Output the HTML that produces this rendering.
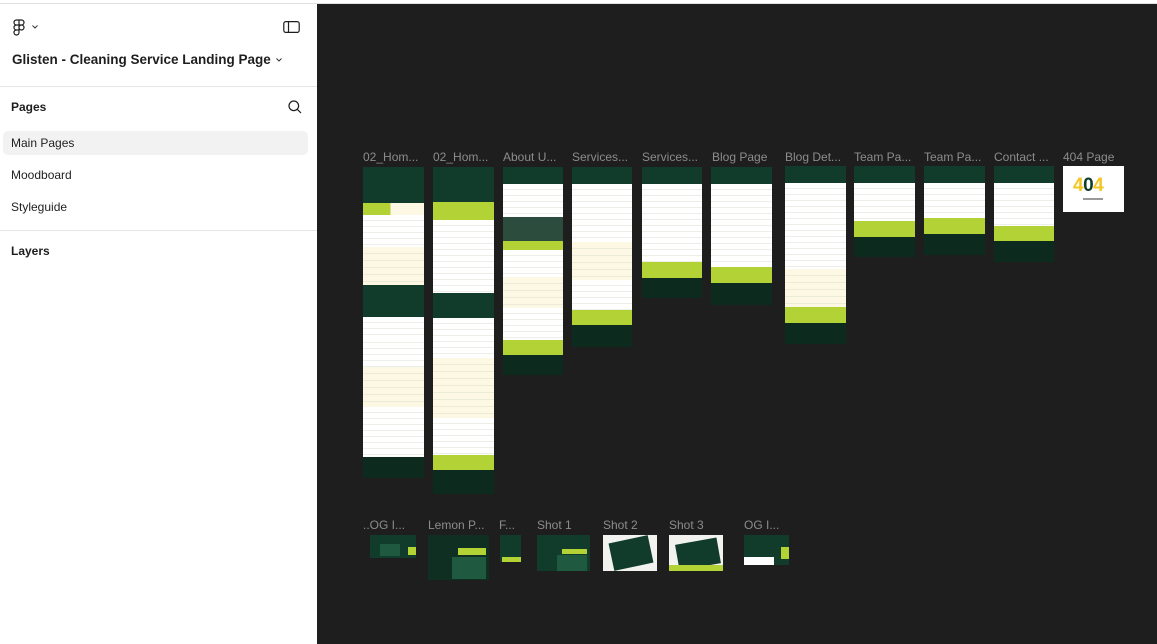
<!DOCTYPE html>
<html><head><meta charset="utf-8"><style>
*{margin:0;padding:0;box-sizing:border-box}
body{width:1157px;height:644px;overflow:hidden;background:#1e1e1e;font-family:"Liberation Sans",sans-serif;position:relative}
#top{position:absolute;left:0;top:0;width:1157px;height:4px;background:#fff;border-bottom:1px solid #e0e0e0}
#side{position:absolute;left:0;top:4px;width:317px;height:640px;background:#fff}
.t{position:absolute;font-size:12px;color:#1e1e1e}
.hr{position:absolute;left:0;width:317px;height:1px;background:#e6e6e6}
.lbl{position:absolute;font-size:12px;color:#8c8c8c;white-space:nowrap}
.f{position:absolute;display:flex;flex-direction:column;overflow:hidden}
.f div{flex:none}
.d{background:#113c2b}
.w{background:#fff repeating-linear-gradient(180deg,#fff 0 5px,#eceee8 5px 6px)}
.l{background:#b3d236}
.c{background:#fcf8e4 repeating-linear-gradient(180deg,#fcf8e4 0 6px,#ecebd8 6px 7px)}
.ft{background:#0d2a1f}.p{background:#2c4c3e}
.th{position:absolute;background:#113c2b;overflow:hidden}
</style></head><body>
<div id="top"></div>
<div id="side">
 <svg style="position:absolute;left:13px;top:15px" width="12" height="17" viewBox="0 0 12 17" fill="none" stroke="#1e1e1e" stroke-width="1.2"><path d="M6 1H3.5a2.5 2.5 0 0 0 0 5H6zM6 1h2.5a2.5 2.5 0 0 1 0 5H6zM6 6H3.5a2.5 2.5 0 0 0 0 5H6zM6 11H3.5A2.5 2.5 0 1 0 6 13.5zM6 8.5a2.5 2.5 0 1 0 5 0a2.5 2.5 0 1 0-5 0"/></svg>
 <svg style="position:absolute;left:32px;top:21px" width="6" height="4" viewBox="0 0 6 4"><path d="M.5.5L3 3 5.5.5" stroke="#333" fill="none"/></svg>
 <svg style="position:absolute;left:283px;top:16px" width="18" height="14" viewBox="0 0 18 14" fill="none" stroke="#1e1e1e" stroke-width="1.2"><rect x=".8" y="1.6" width="15.4" height="10.8" rx="2"/><path d="M5.5 1.6v10.8"/></svg>
 <div class="t" style="left:12px;top:48px;font-size:13.5px;font-weight:bold;color:#1e1e1e">Glisten - Cleaning Service Landing Page</div>
 <svg style="position:absolute;left:276px;top:54px" width="6" height="4" viewBox="0 0 6 4"><path d="M.5.5L3 3 5.5.5" stroke="#333" fill="none"/></svg>
 <div class="hr" style="top:82px"></div>
 <div class="t" style="left:11px;top:96px;font-weight:bold">Pages</div>
 <svg style="position:absolute;left:288px;top:96px" width="14" height="14" viewBox="0 0 14 14" fill="none" stroke="#1e1e1e" stroke-width="1.2"><circle cx="5.8" cy="5.8" r="4.8"/><path d="M9.3 9.3L13 13"/></svg>
 <div style="position:absolute;left:3px;top:127px;width:305px;height:24px;background:#f2f2f2;border-radius:5px"></div>
 <div class="t" style="left:11px;top:132px">Main Pages</div>
 <div class="t" style="left:11px;top:164px">Moodboard</div>
 <div class="t" style="left:11px;top:196px">Styleguide</div>
 <div class="hr" style="top:226px"></div>
 <div class="t" style="left:11px;top:240px;font-weight:bold">Layers</div>
</div>

<div class="lbl" style="left:363px;top:150px">02_Hom...</div>
<div class="lbl" style="left:433px;top:150px">02_Hom...</div>
<div class="lbl" style="left:503px;top:150px">About U...</div>
<div class="lbl" style="left:572px;top:150px">Services...</div>
<div class="lbl" style="left:642px;top:150px">Services...</div>
<div class="lbl" style="left:712px;top:150px">Blog Page</div>
<div class="lbl" style="left:785px;top:150px">Blog Det...</div>
<div class="lbl" style="left:854px;top:150px">Team Pa...</div>
<div class="lbl" style="left:924px;top:150px">Team Pa...</div>
<div class="lbl" style="left:994px;top:150px">Contact ...</div>
<div class="lbl" style="left:1063px;top:150px">404 Page</div>

<div class="f" style="left:363px;top:167px;width:61px;height:311px"><div class="d" style="height:36px"></div><div class="l" style="height:12px;background:linear-gradient(90deg,#b3d236 45%,#fcf8e4 45%)"></div><div class="w" style="height:32px"></div><div class="c" style="height:38px"></div><div class="d" style="height:32px"></div><div class="w" style="height:20px"></div><div class="w" style="height:30px"></div><div class="c" style="height:40px"></div><div class="w" style="height:50px"></div><div class="ft" style="height:21px"></div></div>
<div class="f" style="left:433px;top:167px;width:61px;height:327px"><div class="d" style="height:35px"></div><div class="l" style="height:18px"></div><div class="w" style="height:73px"></div><div class="d" style="height:25px"></div><div class="w" style="height:40px"></div><div class="c" style="height:60px"></div><div class="w" style="height:37px"></div><div class="l" style="height:15px"></div><div class="ft" style="height:24px"></div></div>
<div class="f" style="left:503px;top:167px;width:60px;height:208px"><div class="d" style="height:17px"></div><div class="w" style="height:33px"></div><div class="p" style="height:24px"></div><div class="l" style="height:9px"></div><div class="w" style="height:27px"></div><div class="c" style="height:31px"></div><div class="w" style="height:32px"></div><div class="l" style="height:15px"></div><div class="ft" style="height:20px"></div></div>
<div class="f" style="left:572px;top:167px;width:60px;height:180px"><div class="d" style="height:17px"></div><div class="w" style="height:58px"></div><div class="c" style="height:38px"></div><div class="w" style="height:30px"></div><div class="l" style="height:15px"></div><div class="ft" style="height:22px"></div></div>
<div class="f" style="left:642px;top:167px;width:60px;height:131px"><div class="d" style="height:17px"></div><div class="w" style="height:78px"></div><div class="l" style="height:16px"></div><div class="ft" style="height:20px"></div></div>
<div class="f" style="left:711px;top:167px;width:61px;height:138px"><div class="d" style="height:17px"></div><div class="w" style="height:83px"></div><div class="l" style="height:16px"></div><div class="ft" style="height:22px"></div></div>
<div class="f" style="left:785px;top:166px;width:61px;height:178px"><div class="d" style="height:17px"></div><div class="w" style="height:86px"></div><div class="c" style="height:38px"></div><div class="l" style="height:16px"></div><div class="ft" style="height:21px"></div></div>
<div class="f" style="left:854px;top:166px;width:61px;height:91px"><div class="d" style="height:17px"></div><div class="w" style="height:38px"></div><div class="l" style="height:16px"></div><div class="ft" style="height:20px"></div></div>
<div class="f" style="left:924px;top:166px;width:61px;height:89px"><div class="d" style="height:17px"></div><div class="w" style="height:35px"></div><div class="l" style="height:16px"></div><div class="ft" style="height:21px"></div></div>
<div class="f" style="left:994px;top:166px;width:60px;height:96px"><div class="d" style="height:17px"></div><div class="w" style="height:43px"></div><div class="l" style="height:15px"></div><div class="ft" style="height:21px"></div></div>
<div style="position:absolute;left:1063px;top:166px;width:61px;height:46px;background:#fff"><div style="position:absolute;left:10px;top:9px;font-size:19px;font-weight:bold;color:#f3c623;letter-spacing:-0.5px">4<span style="color:#113c2b">0</span>4</div><div style="position:absolute;left:20px;top:32px;width:20px;height:2px;background:#999"></div></div>

<div class="lbl" style="left:363px;top:518px">..OG I...</div>
<div class="lbl" style="left:428px;top:518px">Lemon P...</div>
<div class="lbl" style="left:499px;top:518px">F...</div>
<div class="lbl" style="left:537px;top:518px">Shot 1</div>
<div class="lbl" style="left:603px;top:518px">Shot 2</div>
<div class="lbl" style="left:669px;top:518px">Shot 3</div>
<div class="lbl" style="left:744px;top:518px">OG I...</div>
<div class="th" style="left:370px;top:535px;width:46px;height:23px"><div style="position:absolute;left:10px;top:9px;width:20px;height:12px;background:#1f5a40"></div><div style="position:absolute;left:38px;top:12px;width:8px;height:8px;background:#b3d236"></div></div>
<div class="th" style="left:428px;top:535px;width:61px;height:45px;background:#0e2f22"><div style="position:absolute;left:30px;top:13px;width:28px;height:7px;background:#b3d236"></div><div style="position:absolute;left:24px;top:22px;width:34px;height:22px;background:#1f5a40"></div></div>
<div class="th" style="left:500px;top:535px;width:21px;height:27px"><div style="position:absolute;left:2px;top:22px;width:19px;height:5px;background:#b3d236"></div></div>
<div class="th" style="left:537px;top:535px;width:53px;height:36px"><div style="position:absolute;left:25px;top:14px;width:25px;height:5px;background:#b3d236"></div><div style="position:absolute;left:20px;top:20px;width:30px;height:16px;background:#1f5a40"></div></div>
<div class="th" style="left:603px;top:535px;width:54px;height:36px;background:#f2f2ee"><div style="position:absolute;left:8px;top:4px;width:40px;height:28px;background:#113c2b;transform:rotate(-12deg)"></div></div>
<div class="th" style="left:669px;top:535px;width:54px;height:36px;background:#f2f2ee"><div style="position:absolute;left:8px;top:6px;width:42px;height:26px;background:#113c2b;transform:rotate(-10deg)"></div><div style="position:absolute;left:0;top:30px;width:54px;height:6px;background:#b3d236"></div></div>
<div class="th" style="left:744px;top:535px;width:45px;height:30px"><div style="position:absolute;left:0;top:22px;width:30px;height:8px;background:#fff"></div><div style="position:absolute;left:37px;top:12px;width:8px;height:12px;background:#b3d236"></div></div>
</body></html>
